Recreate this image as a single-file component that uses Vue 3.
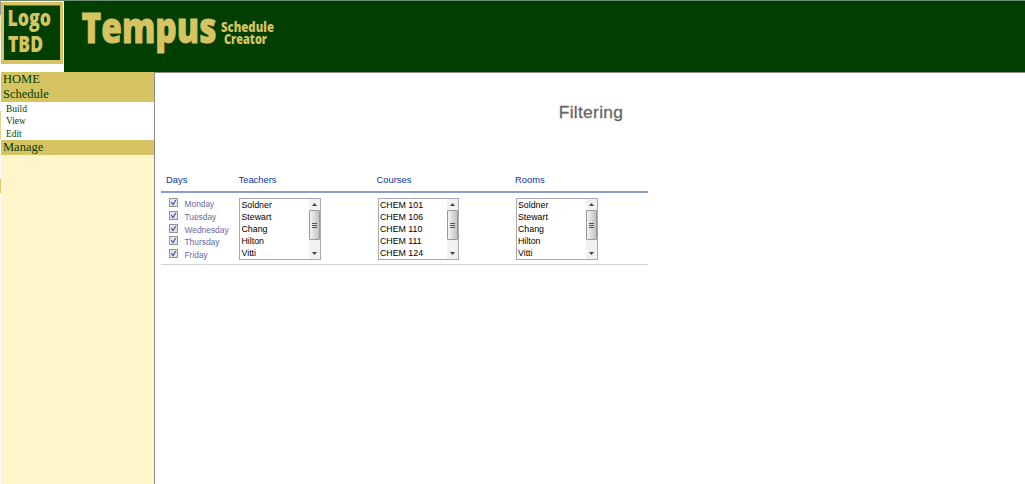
<script setup>
const days = ['Monday', 'Tuesday', 'Wednesday', 'Thursday', 'Friday']
const people = ['Soldner', 'Stewart', 'Chang', 'Hilton', 'Vitti']
const lists = [
  { title: 'Teachers', items: people },
  { title: 'Courses', items: ['CHEM 101', 'CHEM 106', 'CHEM 110', 'CHEM 111', 'CHEM 124'] },
  { title: 'Rooms', items: people },
]
</script>

<template>
  <div class="page">
    <div class="edge"></div>
    <div class="shell">
      <header class="top">
        <div class="logo-cell">
          <svg class="logo" width="63" height="62" viewBox="0 0 63 62">
            <rect width="62" height="62" fill="#d6c463" />
            <rect x="3" y="3" width="56" height="55" fill="#003f00" />
            <rect x="4" y="3" width="55" height="1" fill="#6f7a2c" />
            <g class="brand" font-size="22">
              <text x="6.5" y="24" textLength="43.5" lengthAdjust="spacingAndGlyphs">Logo</text>
              <text x="7" y="50" textLength="35" lengthAdjust="spacingAndGlyphs">TBD</text>
            </g>
          </svg>
        </div>
        <div class="banner">
          <svg width="230" height="71" viewBox="0 0 230 71">
            <g class="brand">
              <text class="name" x="17.5" y="42.2" font-size="43" textLength="135" lengthAdjust="spacingAndGlyphs">Tempus</text>
              <text x="157" y="31" font-size="14" textLength="53" lengthAdjust="spacingAndGlyphs">Schedule</text>
              <text x="160" y="42.5" font-size="14" textLength="43" lengthAdjust="spacingAndGlyphs">Creator</text>
            </g>
          </svg>
        </div>
      </header>
      <div class="body">
        <nav class="side">
          <div class="item">HOME</div>
          <div class="item">Schedule</div>
          <div class="subs">
            <div class="sub">Build</div>
            <div class="sub">View</div>
            <div class="sub">Edit</div>
          </div>
          <div class="item">Manage</div>
        </nav>
        <main class="main">
          <h1>Filtering</h1>
          <section class="filters">
            <div class="row head">
              <div>Days</div>
              <div v-for="l in lists" :key="l.title">{{ l.title }}</div>
            </div>
            <div class="row fields">
              <div class="days">
                <label v-for="d in days" :key="d" class="day">
                  <svg width="9" height="9" viewBox="0 0 9 9">
                    <rect x=".5" y=".5" width="8" height="8" fill="#e3e6ea" stroke="#8f9499" />
                    <path d="M2.3 4.2 4 6.6 6.8 2" fill="none" stroke="#4c5b98" stroke-width="1.2" />
                  </svg>
                  <span>{{ d }}</span>
                </label>
              </div>
              <div v-for="l in lists" :key="l.title" class="cell">
                <div class="list">
                  <div class="options">
                    <div v-for="o in l.items" :key="o" class="option">{{ o }}</div>
                  </div>
                  <div class="scroll">
                    <svg width="11" height="11" viewBox="0 0 11 11"><path d="M3 7 5.5 4 8 7z" fill="#444" /></svg>
                    <div class="thumb"><i></i><i></i><i></i></div>
                    <svg class="down" width="11" height="11" viewBox="0 0 11 11"><path d="M3 4h5L5.5 7z" fill="#444" /></svg>
                  </div>
                </div>
              </div>
            </div>
          </section>
        </main>
      </div>
    </div>
  </div>
</template>

<style>
body { background: #fff; }
</style>

<style scoped>
.page { display: flex; width: 1025px; height: 484px; overflow: hidden; background: #fff; }
.edge {
  width: 1px;
  background: linear-gradient(#999 0 15px, #eee8c8 15px 39px, #fff 39px 111px, #e3d58f 111px 139px, #fff 139px 179px, #dccb70 179px 193px, #fff 193px);
}
.shell { flex: 1; display: flex; flex-direction: column; }
.top { display: flex; height: 72px; box-sizing: border-box; border-top: 1px solid #6d8c74; }
.logo-cell { width: 63px; padding-top: 1px; box-sizing: border-box; }
.logo { display: block; }
.banner { flex: 1; background: #003f00; }
.banner svg { display: block; overflow: visible; }
.brand { font-family: "Open Sans", sans-serif; font-weight: 800; fill: #d6c463; }
.name { stroke: #d6c463; stroke-width: .9px; }
.body { flex: 1; display: flex; }
.side {
  width: 153px; background: #fff5ca; border-right: 1px solid #8b8b8b;
  font-family: "Liberation Serif", serif; color: #003f00;
}
.item { height: 15px; line-height: 15px; padding-left: 2px; font-size: 12.5px; background: #d6c463; }
.item:nth-child(2) { height: 14.5px; }
.subs { background: #fff; padding-bottom: 1px; height: 37.5px; }
.sub { height: 12.8px; line-height: 14px; padding-left: 5px; font-size: 9.4px; }
.main { flex: 1; border-top: 1px solid #8b8b8b; font-family: "Liberation Sans", sans-serif; }
h1 { margin: 29px 0 0; padding-left: 2px; text-align: center; font-size: 17.4px; letter-spacing: .3px; line-height: 20px; font-weight: 400; color: #666; -webkit-text-stroke: .3px #666; }
.filters { width: 487px; margin: 46px 0 0 6px; }
.row { display: grid; grid-template-columns: 77px 138.5px 138px 1fr; }
.head { height: 23px; line-height: 23px; padding-left: 5px; grid-template-columns: 72.5px 138px 138.5px 1fr; font-size: 9.4px; color: #0a35a0; border-bottom: 2px solid #8b9bca; }
.fields { height: 71px; border-bottom: 1px solid #d2d2d2; }
.days { padding: 5px 0 0 8px; }
.day { display: flex; height: 12.75px; font-size: 8.4px; line-height: 13px; color: #6669a8; }
.day span { padding-left: 6.5px; }
.cell { padding-top: 5px; }
.list { display: flex; width: 82px; height: 62px; box-sizing: border-box; border: 1px solid #a8a8b2; margin-left: 1px; }
.row .cell:nth-child(3) .list { width: 81px; }
.options { flex: 1; padding-left: 1.5px; }
.option { height: 12.1px; line-height: 12px; font-size: 8.8px; color: #000; white-space: nowrap; }
.scroll { width: 11px; background: #f1f1f1; display: flex; flex-direction: column; }
.thumb { height: 30px; box-sizing: border-box; border: 1px solid #999; border-radius: 1px; background: linear-gradient(90deg, #f4f4f4, #dcdcdc 45%, #c3c3c7); display: flex; flex-direction: column; align-items: center; justify-content: center; gap: 1px; }
.thumb i { width: 5px; height: 1px; background: #555; }
.down { margin-top: auto; }
</style>
